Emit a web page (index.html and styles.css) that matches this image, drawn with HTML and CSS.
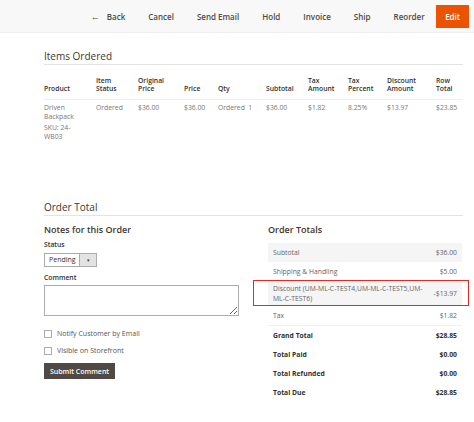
FILE: index.html
```html
<!DOCTYPE html>
<html lang="en">
<head>
    <meta charset="UTF-8">
    <meta name="viewport" content="width=device-width, initial-scale=1.0">
    <title>Order View</title>
    <link rel="stylesheet" href="styles.css">
</head>
<body>
    <div class="page-actions">
        <button class="action back"><span class="arrow">&#8592;</span>Back</button>
        <button class="action">Cancel</button>
        <button class="action">Send Email</button>
        <button class="action">Hold</button>
        <button class="action">Invoice</button>
        <button class="action">Ship</button>
        <button class="action">Reorder</button>
        <button class="action primary">Edit</button>
    </div>

    <div class="content">
        <h2 class="section-title">Items Ordered</h2>
        <table class="items">
            <colgroup>
                <col style="width: 52px">
                <col style="width: 42px">
                <col style="width: 46px">
                <col style="width: 34px">
                <col style="width: 48px">
                <col style="width: 42px">
                <col style="width: 40px">
                <col style="width: 39px">
                <col style="width: 49px">
                <col style="width: 27px">
            </colgroup>
            <thead>
                <tr>
                    <th>Product</th>
                    <th>Item<br>Status</th>
                    <th>Original<br>Price</th>
                    <th>Price</th>
                    <th>Qty</th>
                    <th>Subtotal</th>
                    <th>Tax<br>Amount</th>
                    <th>Tax<br>Percent</th>
                    <th>Discount<br>Amount</th>
                    <th>Row<br>Total</th>
                </tr>
            </thead>
            <tbody>
                <tr>
                    <td>
                        <div>Driven<br>Backpack</div>
                        <div class="sku">SKU: 24-<br>WB03</div>
                    </td>
                    <td>Ordered</td>
                    <td>$36.00</td>
                    <td>$36.00</td>
                    <td>Ordered&nbsp; 1</td>
                    <td>$36.00</td>
                    <td>$1.82</td>
                    <td>8.25%</td>
                    <td>$13.97</td>
                    <td>$23.85</td>
                </tr>
            </tbody>
        </table>

        <h2 class="section-title">Order Total</h2>
        <div class="order-total">
            <div class="notes">
                <h3>Notes for this Order</h3>
                <label class="field-label">Status</label>
                <div class="select">
                    <span class="select-value">Pending</span>
                    <span class="select-arrow">&#9662;</span>
                </div>
                <label class="field-label">Comment</label>
                <textarea class="comment"></textarea>
                <label class="check"><span class="box"></span>Notify Customer by Email</label>
                <label class="check"><span class="box"></span>Visible on Storefront</label>
                <button class="submit">Submit Comment</button>
            </div>

            <div class="totals">
                <h3>Order Totals</h3>
                <div class="row shaded"><span class="label">Subtotal</span><span class="amount">$36.00</span></div>
                <div class="row"><span class="label">Shipping &amp; Handling</span><span class="amount">$5.00</span></div>
                <div class="row shaded discount"><span class="label">Discount (UM-ML-C-TEST4,UM-ML-C-TEST5,UM-ML-C-TEST6)</span><span class="amount">-$13.97</span></div>
                <div class="row tax"><span class="label">Tax</span><span class="amount">$1.82</span></div>
                <div class="row strong"><span class="label">Grand Total</span><span class="amount">$28.85</span></div>
                <div class="row strong"><span class="label">Total Paid</span><span class="amount">$0.00</span></div>
                <div class="row strong"><span class="label">Total Refunded</span><span class="amount">$0.00</span></div>
                <div class="row strong"><span class="label">Total Due</span><span class="amount">$28.85</span></div>
            </div>
        </div>
    </div>
</body>
</html>
```

FILE: styles.css
```css
body {
    font-family: "Open Sans", "Liberation Sans", sans-serif;
    margin: 0;
    padding: 0;
    color: #303030;
    background: #fff;
}

.page-actions {
    display: flex;
    justify-content: flex-end;
    align-items: center;
    height: 33px;
    padding-right: 5px;
    background-color: #f8f8f8;
    border-bottom: 1px solid #eeeeee;
    box-sizing: border-box;
}

.action {
    font-family: inherit;
    font-size: 8px;
    font-weight: 600;
    color: #514943;
    background: none;
    border: none;
    padding: 0 11.5px;
    height: 23px;
    cursor: pointer;
}

.action .arrow {
    margin-right: 7px;
    font-weight: 400;
    font-size: 9px;
}

.action.primary {
    background-color: #eb5202;
    color: #fff;
    padding: 0 9px;
}

.content {
    padding: 0 11px 0 44px;
}

.section-title {
    font-size: 10px;
    font-weight: 400;
    color: #41362f;
    line-height: 12px;
    margin: 17px 0 0;
    padding-bottom: 2px;
    border-bottom: 1px solid #e3e3e3;
}

.items {
    width: 419px;
    table-layout: fixed;
    border-collapse: collapse;
    margin-top: 6px;
    margin-bottom: 56px;
    font-size: 6.8px;
}

.items th {
    text-align: left;
    vertical-align: bottom;
    font-weight: 600;
    line-height: 8px;
    padding: 6px 0;
    color: #303030;
    border-bottom: 1px solid #eeeeee;
}

.items td {
    vertical-align: top;
    line-height: 8.5px;
    padding: 4px 0;
    color: #777;
}

.items .sku {
    margin-top: 3px;
}

.order-total {
    display: flex;
    gap: 29px;
}

.notes {
    width: 195px;
    display: flex;
    flex-direction: column;
    align-items: flex-start;
}

.totals {
    width: 194px;
}

.notes h3, .totals h3 {
    font-size: 9px;
    font-weight: 600;
    color: #41362f;
    line-height: 12px;
    margin: 8px 0 0;
}

.field-label {
    font-size: 6.8px;
    font-weight: 600;
    line-height: 9px;
    margin-top: 4px;
    margin-bottom: 4px;
}

.select {
    display: flex;
    height: 14px;
    width: 53px;
    border: 1px solid #adadad;
    box-sizing: border-box;
    font-size: 7px;
    margin-bottom: 2px;
}

.select-value {
    flex: 1;
    line-height: 12px;
    padding-left: 4px;
    color: #303030;
}

.select-arrow {
    width: 16px;
    text-align: center;
    line-height: 12px;
    font-size: 5px;
    background-color: #e3e3e3;
    border-left: 1px solid #adadad;
    color: #41362f;
}

.comment {
    width: 195px;
    height: 31px;
    margin: -1px 0 0;
    border: 1px solid #adadad;
    box-sizing: border-box;
    resize: vertical;
}

.check {
    display: flex;
    align-items: center;
    gap: 5px;
    font-size: 7px;
    line-height: 10px;
    color: #555;
    margin-top: 13px;
}

.check + .check {
    margin-top: 7px;
}

.check .box {
    width: 8px;
    height: 8px;
    border: 1px solid #adadad;
    box-sizing: border-box;
    background: #fff;
}

.submit {
    margin-top: 7px;
    height: 16px;
    width: 71px;
    padding: 0;
    font-family: inherit;
    font-size: 7px;
    font-weight: 600;
    color: #fff;
    background-color: #514943;
    border: none;
    cursor: pointer;
}

.totals h3 {
    margin-bottom: 7px;
}

.row {
    display: flex;
    justify-content: space-between;
    padding: 5px;
    font-size: 6.8px;
    line-height: 9px;
    color: #666;
}

.row.shaded {
    background-color: #f5f5f5;
}

.row.discount {
    position: relative;
    padding: 3px 5px 2px;
    line-height: 10px;
}

.row.discount .label {
    width: 150px;
}

.row.discount .amount {
    align-self: center;
}

.row.discount::after {
    content: "";
    position: absolute;
    left: -15px;
    right: -7px;
    top: -1px;
    bottom: 0;
    border: 1.5px solid #e02b27;
}

.row.tax {
    border-bottom: 1px solid #f1f1f1;
}

.row.strong {
    font-weight: 700;
    color: #303030;
}
```
